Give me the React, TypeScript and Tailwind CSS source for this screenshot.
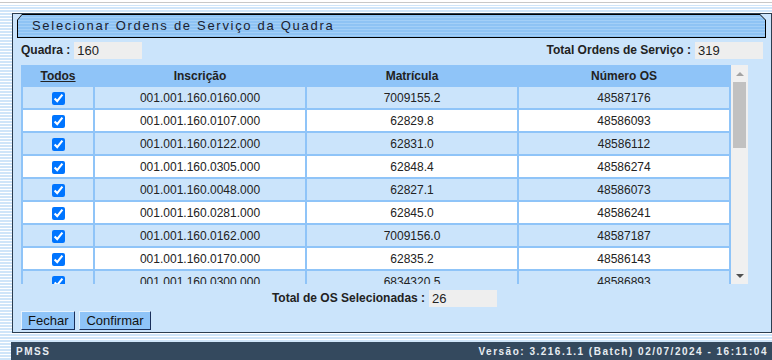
import React from "react";

const rows = [
  ["001.001.160.0160.000", "7009155.2", "48587176"],
  ["001.001.160.0107.000", "62829.8", "48586093"],
  ["001.001.160.0122.000", "62831.0", "48586112"],
  ["001.001.160.0305.000", "62848.4", "48586274"],
  ["001.001.160.0048.000", "62827.1", "48586073"],
  ["001.001.160.0281.000", "62845.0", "48586241"],
  ["001.001.160.0162.000", "7009156.0", "48587187"],
  ["001.001.160.0170.000", "62835.2", "48586143"],
  ["001.001.160.0300.000", "6834320.5", "48586893"],
];

const Field = ({ label, value }: { label: string; value: string }) => (
  <div className="flex items-center gap-[4px]">
    <span className="text-[12px] font-bold text-[#222]">{label}</span>
    <div className="w-[68px] h-[17px] bg-[#eeeeee] pl-[3px] text-[13px] leading-[17px] text-[#222]">
      {value}
    </div>
  </div>
);

const App = () => {
  return (
    <div
      className="w-[772px] h-[360px] overflow-hidden bg-[repeating-linear-gradient(to_bottom,#ffffff_0px,#ffffff_1px,#cfe5f9_1px,#cfe5f9_3px)]"
      style={{ fontFamily: '"Liberation Sans", Arial, sans-serif' }}
    >
      <div className="h-[5px] bg-white pt-[2px]">
        <div className="h-[1px] bg-[#c8c8c8]" />
      </div>

      <div className="ml-[12px] mt-[8px] w-[760px] h-[320px] border border-[#2c3e50] bg-[#cbe4fb] flex flex-col">
        {/* title bar */}
        <div className="ml-[4px] w-[749px] h-[24px] bg-black [clip-path:polygon(5px_0,calc(100%-6px)_0,100%_6px,100%_100%,0_100%,0_6px)] p-[1px] shrink-0">
          <div className="h-full flex items-center pl-[14px] bg-[repeating-linear-gradient(to_bottom,#8ec3f4_0px,#8ec3f4_2px,#a3cff7_2px,#a3cff7_3px)] [clip-path:polygon(4px_0,calc(100%-5px)_0,100%_5px,100%_100%,0_100%,0_5px)]">
            <span className="text-[13px] tracking-[1.7px] text-[#1b2230]">
              Selecionar Ordens de Serviço da Quadra
            </span>
          </div>
        </div>

        <div className="mt-[3px] ml-[8px] mr-[8px] flex justify-between">
          <Field label="Quadra :" value="160" />
          <Field label="Total Ordens de Serviço :" value="319" />
        </div>

        <div className="mt-[6px] ml-[8px] flex h-[219px]">
          <div className="w-[710px] h-full overflow-hidden bg-[#8fc4f8]">
            <table className="table-fixed border-separate border-spacing-[2px] w-[710px] text-[12px] text-[#222]">
              <thead>
                <tr className="h-[18px]">
                  <th className="w-[70px] p-0 font-bold underline">Todos</th>
                  <th className="w-[210px] p-0 font-bold">Inscrição</th>
                  <th className="w-[210px] p-0 font-bold">Matrícula</th>
                  <th className="w-[210px] p-0 font-bold">Número OS</th>
                </tr>
              </thead>
              <tbody>
                {rows.map((r, i) => (
                  <tr
                    key={r[0]}
                    className={`h-[21px] ${i % 2 === 0 ? "bg-[#cbe4fb]" : "bg-white"}`}
                  >
                    <td className="p-0 text-center">
                      <input
                        type="checkbox"
                        checked
                        readOnly
                        className="w-[13px] h-[13px] align-middle accent-[#0075ff] m-0"
                      />
                    </td>
                    <td className="p-0 text-center">{r[0]}</td>
                    <td className="p-0 text-center">{r[1]}</td>
                    <td className="p-0 text-center">{r[2]}</td>
                  </tr>
                ))}
              </tbody>
            </table>
          </div>
          {/* scrollbar */}
          <div className="w-[17px] h-full bg-[#f0f0f0] flex flex-col items-center">
            <div className="h-[17px] flex items-center justify-center">
              <div className="w-0 h-0 border-l-[4px] border-r-[4px] border-b-[4px] border-l-transparent border-r-transparent border-b-[#a3a3a3]" />
            </div>
            <div className="w-[13px] h-[66px] bg-[#c1c1c1]" />
            <div className="flex-1" />
            <div className="h-[17px] flex items-center justify-center">
              <div className="w-0 h-0 border-l-[4px] border-r-[4px] border-t-[4px] border-l-transparent border-r-transparent border-t-[#505050]" />
            </div>
          </div>
        </div>

        <div className="mt-[5px] ml-[8px] w-[727px] flex justify-center">
          <Field label="Total de OS Selecionadas :" value="26" />
        </div>

        <div className="mt-[4px] ml-[8px] flex gap-[4px]">
          {["Fechar", "Confirmar"].map((b) => (
            <button
              key={b}
              className="h-[19px] px-[6px] bg-[#8fc4f8] border border-t-[#e6f2fd] border-l-[#e6f2fd] border-b-[#1a2f5a] border-r-[#1a2f5a] text-[13px] leading-[16px] text-[#111]"
            >
              {b}
            </button>
          ))}
        </div>
      </div>

      <div className="ml-[11px] mt-[9px] h-[18px] bg-[#34495e] flex items-center justify-between pl-[5px] pr-[4px] text-[10px] font-bold text-[#e8edf2] tracking-[1.5px]">
        <span>PMSS</span>
        <span>Versão: 3.216.1.1 (Batch) 02/07/2024 - 16:11:04</span>
      </div>
    </div>
  );
};

export default App;
